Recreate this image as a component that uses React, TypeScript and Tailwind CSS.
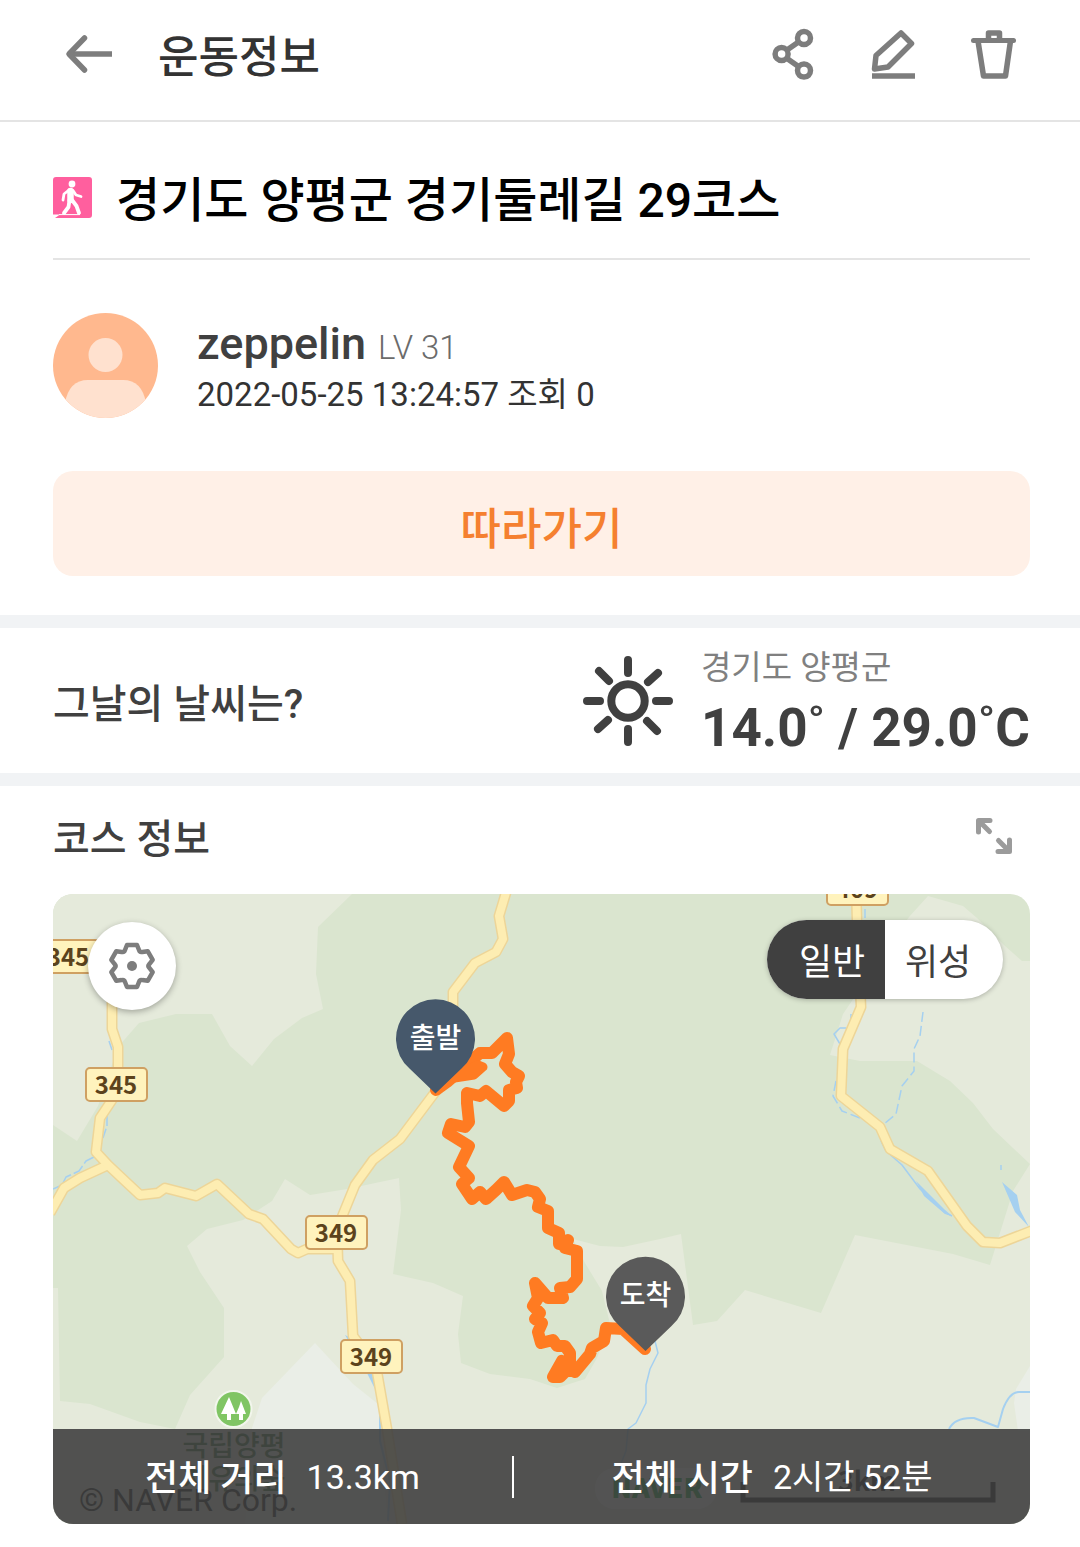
import React, { useState } from "react";

const FONT = "font-['Roboto','Noto_Sans_CJK_KR',sans-serif]";
const MAP_FONT = "font-['Noto_Sans_CJK_KR',sans-serif]";

function BackIcon() {
  return (
    <svg viewBox="0 0 48 48" className="size-12" fill="none" stroke="#7d7d7d" strokeWidth="5.5" aria-hidden="true">
      <path d="M4 24H47" />
      <path d="M19.500 8 4 24 19.500 40" strokeLinecap="round" strokeLinejoin="round" />
    </svg>
  );
}

function ShareIcon() {
  return (
    <svg viewBox="0 0 48 48" className="size-12 overflow-visible" fill="none" stroke="#7d7d7d" strokeWidth="5.5" aria-hidden="true">
      <circle cx="35" cy="8" r="6.5" />
      <circle cx="12.600" cy="24" r="6.500" />
      <circle cx="35" cy="40.600" r="6.500" />
      <path d="M18 20 29.500 12M18 28.500 29.500 36.500" />
    </svg>
  );
}

function EditIcon() {
  return (
    <svg viewBox="0 0 48 48" className="size-12 overflow-visible" fill="none" stroke="#7d7d7d" strokeWidth="5.5" strokeLinejoin="round" aria-hidden="true">
      <path d="M32 3 42.500 13.500 19 37 5.500 39 7 25.500Z" />
      <path d="M3 46H46" />
    </svg>
  );
}

function TrashIcon() {
  return (
    <svg viewBox="0 0 48 48" className="size-12 overflow-visible" fill="none" stroke="#7d7d7d" strokeWidth="5.5" strokeLinejoin="round" aria-hidden="true">
      <path d="M4.500 10.500H44.500" strokeLinecap="round" strokeWidth="5" />
      <path d="M19.500 10V3H30.500V10" />
      <path d="M9 11 14.500 46H36.500L41.500 11" />
    </svg>
  );
}

function WalkIcon() {
  return (
    <svg viewBox="0 0 39 41" className="h-[41px] w-[39px] shrink-0" aria-hidden="true">
      <path d="M3 0H36Q39 0 39 3V38Q39 41 36 41H2L7 37.500H0V3Q0 0 3 0Z" fill="#ff5f9e" />
      <circle cx="19" cy="7" r="3.400" fill="#fff" />
      <g fill="none" stroke="#fff" strokeLinecap="round" strokeLinejoin="round">
        <path d="M17.500 14V23" strokeWidth="6.500" />
        <path d="M16 13 11 17 10 23M20 13.500 23 18 28 19.500" strokeWidth="2.800" />
        <path d="M16.500 23 15.500 30 11 36M19 23 23.500 29 26 36" strokeWidth="3.800" />
      </g>
      <path d="M6 37.600H27" stroke="#fff" strokeWidth="1" />
    </svg>
  );
}

function Avatar() {
  return (
    <svg viewBox="0 0 105 105" className="size-[105px] shrink-0 rounded-full" aria-hidden="true">
      <rect width="105" height="105" fill="#ffb88e" />
      <circle cx="52.500" cy="42" r="17" fill="#ffe1cf" />
      <path d="M12 105V90Q16 67 35 67H70Q89 67 93 90V105Z" fill="#ffe1cf" />
    </svg>
  );
}

function SunIcon() {
  return (
    <svg viewBox="-45 -45 90 90" className="size-[90px] shrink-0" fill="none" stroke="#404040" strokeWidth="8" strokeLinecap="round" aria-hidden="true">
      <circle r="16.700" />
      <path d="M0-41V-28M0 28V41M-41 0H-28M28 0H41M-29-30-19-20M20-19 30-28M-20 19-30 28M19 20 29 30" />
    </svg>
  );
}

function ExpandIcon() {
  return (
    <svg viewBox="0 0 48 48" className="size-12" fill="none" stroke="#9b9b9b" strokeWidth="5" strokeLinejoin="round" strokeLinecap="round" aria-hidden="true">
      <path d="M8.500 20V8.500H20M9 9 19.500 19.500" />
      <path d="M28 39.500H39.500V28M39 39 28.500 28.500" />
    </svg>
  );
}

function gearOutline() {
  const tooth: [number, number][] = [[-7, -16], [-5, -21], [5, -21], [7, -16], [7.75, -13.4]];
  const parts: string[] = [];
  for (let i = 0; i < 6; i++) {
    const a = (i * Math.PI) / 3;
    const p = tooth.map(([x, y]) => `${x * Math.cos(a) - y * Math.sin(a)} ${x * Math.sin(a) + y * Math.cos(a)}`);
    if (i === 0) parts.push(`M${p[0]}`);
    const b = ((i + 1) * Math.PI) / 3;
    const next = `${-7 * Math.cos(b) + 16 * Math.sin(b)} ${-7 * Math.sin(b) - 16 * Math.cos(b)}`;
    parts.push(`L${p[1]}L${p[2]}L${p[3]}Q${p[4]} ${next}`);
  }
  return parts.join("") + "Z";
}

function GearIcon() {
  return (
    <svg viewBox="-24 -24 48 48" className="size-12" fill="none" stroke="#7d7d7d" strokeWidth="4.500" strokeLinejoin="round" aria-hidden="true">
      <path d={gearOutline()} />
      <circle r="5" fill="#7d7d7d" stroke="none" />
    </svg>
  );
}

const ROADS = [
  "M108 1164 80 1177 64 1187 50 1212",
  "M112 990V1028L118 1046V1090L100 1117 96 1151 108 1164 125 1180 140 1194 158 1192 165 1187 196 1195 217 1183 249 1213 263 1218 291 1248 298 1252 307 1248H336",
  "M508 885 499 915 503 938 496 951 475 962 453 991V1020L436 1090 400 1138 373 1159 355 1184 337 1228 338 1260 350 1280 353 1335 376 1365 387 1428 402 1523",
  "M856 885 857 920 861 1006 843 1048 841 1095 880 1126 890 1148 928 1170 967 1225 983 1241 1000 1242 1036 1228",
];

const ROUTE =
  "M436 1089 447 1081 480 1052 492 1052 507 1037 509 1053 505 1063 512 1071 519 1075 516 1081 517 1087 509 1089 509 1100 504 1105 486 1090 480 1095 467 1092 467 1102 469 1121 465 1126 451 1123 448 1132 469 1145 459 1166 469 1177 462 1183 472 1198 480 1191 486 1198 496 1189 504 1181 512 1194 527 1189 535 1191 540 1198 538 1206 548 1210 548 1227 559 1232 559 1243 568 1239 565 1247 577 1250 577 1278 570 1286 560 1287 563 1297 548 1297 535 1282 538 1297 533 1305 540 1312 535 1318 542 1322 538 1331 541 1342 553 1339 557 1345 565 1345 570 1352 570 1363 562 1360 553 1376 560 1376 568 1368 575 1371 590 1353 592 1347 604 1340 606 1327 623 1328 645 1348";

const SHIELDS = [
  { x: 38, y: 939, label: "345" },
  { x: 86, y: 1067, label: "345" },
  { x: 306, y: 1215, label: "349" },
  { x: 341, y: 1339, label: "349" },
  { x: 827, y: 871, label: "409" },
];

function Pin({ x, y, color, label }: { x: number; y: number; color: string; label: string }) {
  return (
    <g transform={`translate(${x} ${y})`}>
      <path d="M0 55-26 30A39.500 39.500 0 1 1 26 30Z" fill={color} />
      <text y="9" textAnchor="middle" fill="#fff" fontSize="28" fontWeight="500">{label}</text>
    </g>
  );
}

function CourseMap() {
  return (
    <svg viewBox="53 893 977 630" className={`block w-full ${MAP_FONT}`} role="img" aria-label="코스 지도">
      <rect x="53" y="893" width="977" height="630" fill="#dae5cf" />
      <g fill="#e5eadb">
        <path d="M53 893H352L318 926 316 973 323 1008 302 1017 274 1038 252 1065 230 1045 212 1013H176L139 1022 118 1046 98 1105 77 1140 53 1124Z" />
        <path d="M53 1287H58L60 1400 90 1403 140 1421 175 1428 190 1394 224 1356V1307L200 1271 187 1245 207 1228 243 1219 272 1200 285 1178 310 1194 347 1188 399 1177 401 1209 393 1273 433 1282 463 1295 458 1333 461 1362 490 1373 530 1378 557 1387 585 1378 597 1357 610 1323 602 1290 585 1262 573 1238 600 1245 623 1246 660 1238 681 1233 693 1324 717 1320 745 1289 821 1312 855 1234 953 1253 990 1264 1013 1190 1030 1163V1523H53Z" />
        <path d="M909 916 928 895 963 905 977 917 1005 945 1022 960H1030V1163L993 1128 973 1102 950 1080 917 1060H860L830 1054 843 1013Z" />
      </g>
      <g fill="#eaeee7">
        <path d="M315 1342 353 1383 378 1403 388 1523H245L252 1427 262 1397Z" />
        <path d="M1030 1365 1016 1388 1014 1402 1018 1430H1030Z" />
      </g>

      <g fill="none" stroke="#a5d0f0" strokeWidth="1.500" strokeLinejoin="round">
        <path d="M109 1040 112 1049M107 1113V1125L103 1137M94 1156 86 1160 79 1170 66 1176 62 1184 53 1188" strokeDasharray="12 3" />
        <path d="M865 908V917M851 1013V1024M846 1027H840L834 1033 840 1043" />
        <path d="M836 1080 833 1095 842 1110 860 1117M923 1011 920 1035 914 1048V1070L902 1085 896 1113 884 1123M1001 1164V1169" strokeDasharray="10 4" />
        <path d="M881 1140 886 1150 902 1164 920 1188 944 1211 952 1215" />
        <path d="M655 1340 658 1352 650 1368 646 1384V1402L636 1422 628 1428 626 1450 614 1480" />
        <path d="M949 1428Q955 1416 974 1417L998 1426 1003 1408Q1010 1390 1020 1391H1030" strokeWidth="2" />
        <path d="M380 1415V1440L390 1480 388 1520" strokeWidth="2" />
      </g>
      <path d="M916 1180 944 1208 952 1215 945 1213 924 1195ZM1002 1181 1017 1194 1020 1209 1029 1226 1015 1211ZM366 1370H376L377 1392ZM345 1334 355 1339H348Z" fill="#a5d0f0" />

      <g fill="none" strokeLinejoin="round">
        {ROADS.map((d) => <path key={d} d={d} stroke="#edd598" strokeWidth="11" />)}
        {ROADS.map((d) => <path key={d} d={d} stroke="#fdedb2" strokeWidth="8" />)}
      </g>

      {SHIELDS.map((s) => (
        <g key={`${s.x}-${s.y}`}>
          <rect x={s.x} y={s.y} width="61" height="33" rx="4" fill="#fff3bd" stroke="#cfa062" strokeWidth="2" />
          <text x={s.x + 30} y={s.y + 26} textAnchor="middle" fontSize="24" fontWeight="700" fill="#5c431c">{s.label}</text>
        </g>
      ))}

      <circle cx="233.500" cy="1408" r="18" fill="#80c564" stroke="#f2f6ec" strokeWidth="2" />
      <path d="M229 1396 236 1413H231V1419H227V1413H221ZM241 1400 246 1413H243V1419H239V1413H236L239 1406Z" fill="#fff" />
      <g textAnchor="middle" fontSize="28" fontWeight="500" fill="#2e6b2e">
        <text x="234" y="1455">국립양평</text>
        <text x="234" y="1488">치유의숲</text>
      </g>

      <text x="79" y="1510" fontSize="32" fill="#000" className="font-['Roboto',sans-serif]">© NAVER Corp.</text>
      <rect x="595" y="1467" width="122" height="41" rx="20" fill="#fff" />
      <text x="657" y="1497" textAnchor="middle" fontSize="27" fontWeight="900" fill="#00a030">NAVER</text>
      <text x="867" y="1490" textAnchor="middle" fontSize="27" fontWeight="700" fill="#000">3km</text>
      <path d="M743 1481V1499H993V1481" fill="none" stroke="#000" strokeWidth="5" />

      <path d={ROUTE} fill="none" stroke="#ff7b22" strokeWidth="12" strokeLinejoin="round" strokeLinecap="round" />
      <path d="M450 1076 478 1064 483 1066 474 1074 448 1078Z" fill="#ff7b22" stroke="#ff7b22" strokeWidth="9" strokeLinejoin="round" />
      <Pin x={435.5} y={1037.5} color="#46586b" label="출발" />
      <Pin x={645.5} y={1295} color="#5a5a5a" label="도착" />
    </svg>
  );
}

export default function App() {
  const [mode, setMode] = useState("normal");
  return (
    <main className={`min-h-screen bg-white text-[#404040] ${FONT}`}>
      <header className="flex h-[122px] items-center border-b-2 border-[#e4e4e4] pr-[63px] pb-3 pl-[65px]">
        <button type="button" aria-label="뒤로"><BackIcon /></button>
        <h1 className="ml-[45px] pt-2 text-[44px] leading-[60px] font-medium text-[#333]">운동정보</h1>
        <div className="ml-auto flex gap-[52px]">
          <button type="button" aria-label="공유"><ShareIcon /></button>
          <button type="button" aria-label="수정"><EditIcon /></button>
          <button type="button" aria-label="삭제"><TrashIcon /></button>
        </div>
      </header>

      <section className="pr-[50px] pl-[53px]">
        <div className="flex h-[138px] items-center gap-6 border-b-2 border-[#e4e4e4] pt-[14px]">
          <WalkIcon />
          <h2 className="pt-2 text-[48px] leading-[60px] font-medium text-black">경기도 양평군 경기둘레길 29코스</h2>
        </div>
        <div className="mt-[52px] flex items-center gap-[39px]">
          <Avatar />
          <div className="pt-2">
            <p className="flex items-baseline gap-3 leading-[48px]">
              <span className="text-[45px] font-medium">zeppelin</span>
              <span className="text-[33px] font-light text-[#6b6b6b]">LV 31</span>
            </p>
            <p className="text-[33px] leading-[46px] text-[#333]">2022-05-25 13:24:57 조회 0</p>
          </div>
        </div>
        <button type="button" className="mt-[53px] mb-[39px] h-[105px] w-full rounded-[20px] bg-[#fff0e7] pt-3 text-[44px] leading-[60px] font-medium text-[#f58030]">
          따라가기
        </button>
      </section>

      <section className="flex h-[171px] items-center border-y-[13px] border-[#f1f3f5] pr-[50px] pl-[53px]">
        <h2 className="pt-2 text-[40px] leading-[56px] font-medium">그날의 날씨는?</h2>
        <div className="ml-auto flex items-center gap-7">
          <SunIcon />
          <div className="pb-1.5">
            <p className="text-[33px] leading-[60px] text-[#808080]">경기도 양평군</p>
            <p className="text-[53px] leading-[60px] font-bold">14.0˚ / 29.0˚C</p>
          </div>
        </div>
      </section>

      <section className="pr-[50px] pb-6 pl-[53px]">
        <div className="flex h-[108px] items-center justify-between pr-3 pb-2">
          <h2 className="pt-2 text-[40px] leading-[56px] font-medium">코스 정보</h2>
          <button type="button" aria-label="지도 확대"><ExpandIcon /></button>
        </div>
        <div className="relative overflow-hidden rounded-[20px]">
          <CourseMap />
          <button type="button" aria-label="지도 설정" className="absolute top-7 left-[35px] flex size-[88px] items-center justify-center rounded-full bg-white shadow-[0_2px_6px_rgba(0,0,0,0.3)]">
            <GearIcon />
          </button>
          <div className="absolute top-[26px] right-[27px] flex h-[79px] w-[236px] overflow-hidden rounded-full bg-white text-[36px] leading-[48px] shadow-[0_1px_5px_rgba(0,0,0,0.25)]">
            <button type="button" aria-pressed={mode === "normal"} onClick={() => setMode("normal")} className="flex-1 pt-1.5 pl-3 aria-pressed:bg-[#404040] aria-pressed:text-white">일반</button>
            <button type="button" aria-pressed={mode === "satellite"} onClick={() => setMode("satellite")} className="flex-1 pt-1.5 pr-3 aria-pressed:bg-[#404040] aria-pressed:text-white">위성</button>
          </div>
          <dl className="absolute inset-x-0 bottom-0 grid h-[95px] grid-cols-[459fr_518fr] items-center bg-[#404040]/90 text-white">
            <div className="flex items-center justify-center gap-5">
              <dt className="pt-1 text-[36px] leading-[48px] font-medium">전체 거리</dt>
              <dd className="text-[34px] leading-[48px]">13.3km</dd>
            </div>
            <div className="flex h-[42px] items-center justify-center gap-5 border-l-2 border-white">
              <dt className="pt-1 text-[36px] leading-[48px] font-medium">전체 시간</dt>
              <dd className="text-[34px] leading-[48px]">2시간 52분</dd>
            </div>
          </dl>
        </div>
      </section>
    </main>
  );
}
